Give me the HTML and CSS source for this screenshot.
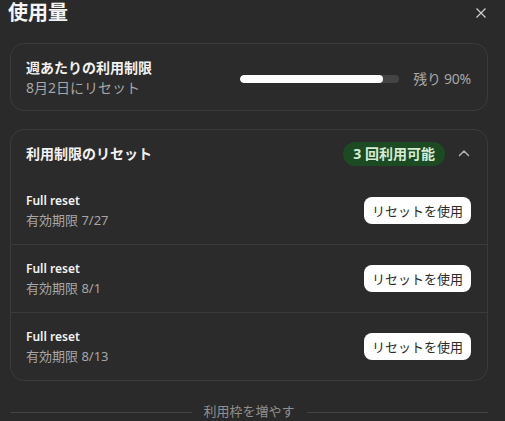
FILE: index.html
```html
<!DOCTYPE html>
<html lang="ja">
<head>
<meta charset="utf-8">
<link rel="stylesheet" href="styles.css">
</head>
<body>
<div class="panel">
  <div class="head">
    <h1 class="title">使用量</h1>
    <button class="close" aria-label="閉じる">
      <svg width="10" height="10" viewBox="0 0 10 10"><path d="M0.5 0.5 L9.5 9.5 M9.5 0.5 L0.5 9.5" stroke="#cfcfcf" stroke-width="1.2" fill="none"/></svg>
    </button>
  </div>

  <section class="card usage">
    <div class="usage-text">
      <div class="strong">週あたりの利用制限</div>
      <div class="muted">8月2日にリセット</div>
    </div>
    <div class="usage-meter">
      <div class="track"><div class="fill" style="width:90%"></div></div>
      <span class="muted remain">残り 90%</span>
    </div>
  </section>

  <section class="card resets">
    <div class="resets-head">
      <div class="strong">利用制限のリセット</div>
      <div class="head-right">
        <span class="badge">3 回利用可能</span>
        <svg class="chev" width="12" height="8" viewBox="0 0 12 8"><path d="M1.5 6.5 L6 2 L10.5 6.5" stroke="#b0b0b0" stroke-width="1.5" fill="none" stroke-linecap="round" stroke-linejoin="round"/></svg>
      </div>
    </div>
    <div class="row">
      <div class="row-text">
        <div class="name">Full reset</div>
        <div class="muted">有効期限 7/27</div>
      </div>
      <button class="use">リセットを使用</button>
    </div>
    <div class="row">
      <div class="row-text">
        <div class="name">Full reset</div>
        <div class="muted">有効期限 8/1</div>
      </div>
      <button class="use">リセットを使用</button>
    </div>
    <div class="row">
      <div class="row-text">
        <div class="name">Full reset</div>
        <div class="muted">有効期限 8/13</div>
      </div>
      <button class="use">リセットを使用</button>
    </div>
  </section>

  <div class="more">
    <span class="line"></span>
    <span class="more-label">利用枠を増やす</span>
    <span class="line"></span>
  </div>
</div>
</body>
</html>
```

FILE: styles.css
```css
* { box-sizing: border-box; }
html, body {
  margin: 0;
  background: #2a2a2a;
  height: 100%;
  overflow: hidden;
}
body {
  font-family: "Noto Sans", "Noto Sans CJK JP", sans-serif;
  color: #f2f2f2;
  font-size: 14px;
}
.panel {
  padding: 0 17px 0 10px;
  display: flex;
  flex-direction: column;
}
.head {
  display: flex;
  justify-content: space-between;
  align-items: center;
  height: 26px;
  margin-bottom: 17px;
}
.title {
  margin: 0 0 0 -2px;
  font-size: 20px;
  font-weight: 700;
  line-height: 26px;
  color: #f4f4f4;
}
.close {
  background: none;
  border: 0;
  padding: 0;
  width: 10px;
  height: 10px;
  margin: 0 2px 0 0;
  display: flex;
}
.card {
  border: 1px solid #3b3b3b;
  border-radius: 14px;
  background: #2b2b2b;
}
.strong {
  font-weight: 700;
  font-size: 14px;
  line-height: 20px;
  color: #f2f2f2;
}
.muted {
  color: #a6a6a6;
  font-size: 14px;
  line-height: 20px;
}
.usage {
  display: flex;
  justify-content: space-between;
  align-items: center;
  padding: 14px 16px 12px 15px;
  height: 68px;
}
.usage-meter {
  display: flex;
  align-items: center;
  gap: 14px;
  margin-top: 1px;
}
.remain { letter-spacing: -0.25px; }
.track {
  width: 159px;
  height: 8px;
  border-radius: 4px;
  background: #444;
  overflow: hidden;
}
.fill {
  height: 100%;
  background: #fff;
  border-radius: 4px;
}
.resets {
  margin-top: 18px;
}
.resets-head {
  height: 47px;
  display: flex;
  justify-content: space-between;
  align-items: center;
  padding: 0 17px 0 15px;
}
.head-right {
  display: flex;
  align-items: center;
  gap: 13px;
}
.badge {
  background: #1c4a23;
  color: #d4ecd4;
  font-weight: 700;
  font-size: 14px;
  line-height: 24px;
  padding: 0 10px;
  border-radius: 12px;
}
.chev { display: block; margin-top: -1px; }
.row {
  height: 68px;
  display: flex;
  align-items: center;
  justify-content: space-between;
  padding: 0 16px 0 15px;
  border-bottom: 1px solid #3b3b3b;
}
.row:last-child {
  border-bottom: 0;
  height: 67px;
}
.row-text .name {
  font-weight: 600;
  font-size: 12px;
  line-height: 18px;
  color: #f2f2f2;
}
.row-text .muted {
  font-size: 13px;
  line-height: 18px;
  margin-top: 1px;
}
.use {
  font-family: "Noto Sans CJK JP", sans-serif;
  font-size: 13px;
  line-height: 27px;
  height: 27px;
  padding: 0 8px;
  border: 0;
  border-radius: 8px;
  background: #fff;
  color: #2a2a2a;
}
.more {
  margin-top: 20px;
  display: flex;
  align-items: center;
  gap: 12px;
}
.line {
  flex: 1;
  height: 1px;
  background: #444;
  margin-top: 2px;
}
.more-label {
  color: #8f8f8f;
  font-size: 13px;
  line-height: 20px;
}
```
